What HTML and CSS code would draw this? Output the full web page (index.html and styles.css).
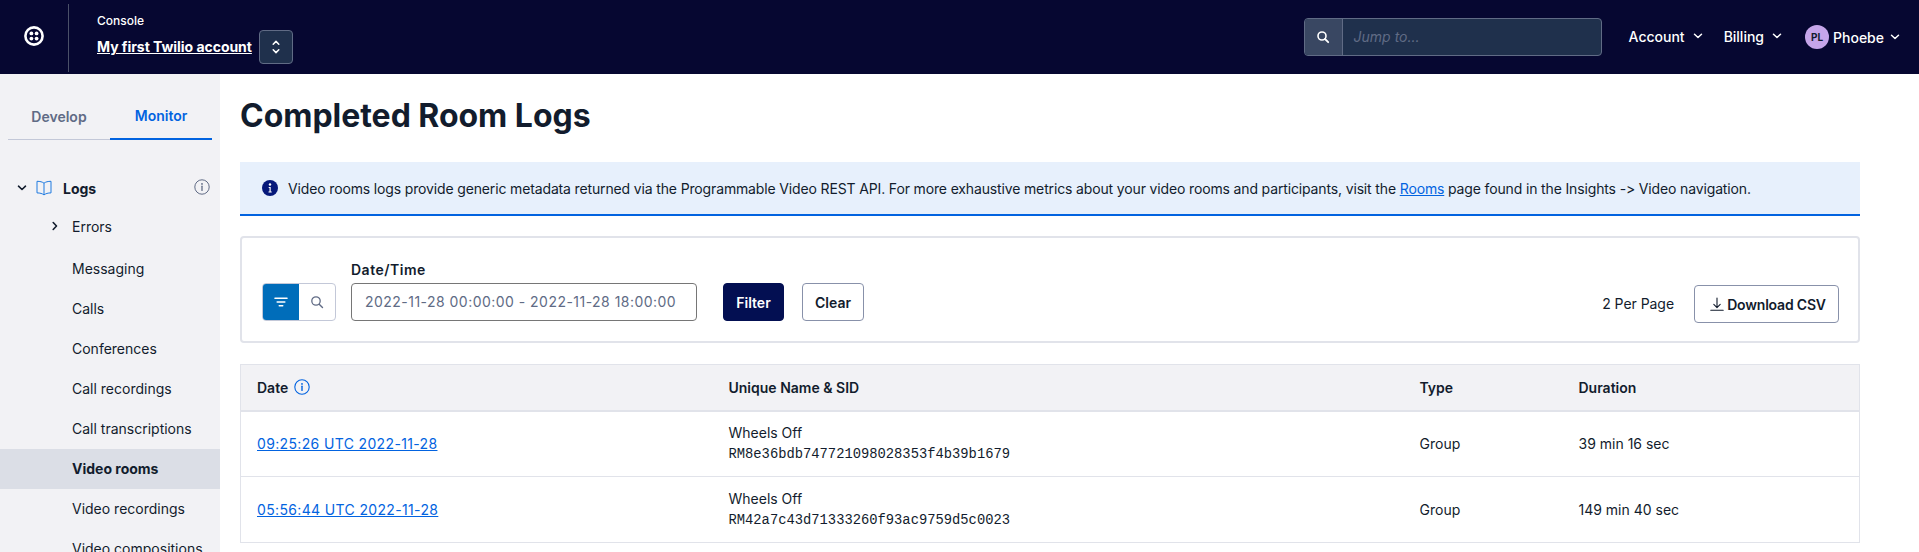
FILE: index.html
```html
<!DOCTYPE html>
<html lang="en">
<head>
<meta charset="utf-8">
<title>Completed Room Logs</title>
<link rel="stylesheet" href="styles.css">
</head>
<body>
<header class="topbar">
  <div class="logo-cell">
    <svg class="logo" viewBox="0 0 20 20" width="20" height="20"><circle cx="10" cy="10" r="8.6" fill="none" stroke="#fff" stroke-width="2.6"/><circle cx="7.4" cy="7.4" r="1.9" fill="#fff"/><circle cx="12.6" cy="7.4" r="1.9" fill="#fff"/><circle cx="7.4" cy="12.6" r="1.9" fill="#fff"/><circle cx="12.6" cy="12.6" r="1.9" fill="#fff"/></svg>
  </div>
  <div class="account">
    <div class="console">Console</div>
    <div class="account-row">
      <a class="account-name">My first Twilio account</a>
      <span class="switcher"><svg viewBox="0 0 12 20" width="12" height="20"><path d="M3.2 7.2 6 4.4l2.8 2.8M3.2 12.8 6 15.6l2.8-2.8" fill="none" stroke="#fff" stroke-width="1.5" stroke-linecap="round" stroke-linejoin="round"/></svg></span>
    </div>
  </div>
  <div class="jump">
    <span class="jump-icon"><svg viewBox="0 0 14 14" width="14" height="14"><circle cx="6" cy="6" r="4" fill="none" stroke="#fff" stroke-width="1.6"/><path d="m9 9 3.2 3.2" stroke="#fff" stroke-width="1.8" stroke-linecap="round"/></svg></span>
    <span class="jump-text">Jump to...</span>
  </div>
  <nav class="top-nav">
    <span class="top-item">Account<svg class="chev" viewBox="0 0 10 6" width="10" height="6"><path d="m1.5 1.2 3.5 3.3 3.5-3.3" fill="none" stroke="#fff" stroke-width="1.5" stroke-linecap="round" stroke-linejoin="round"/></svg></span>
    <span class="top-item">Billing<svg class="chev" viewBox="0 0 10 6" width="10" height="6"><path d="m1.5 1.2 3.5 3.3 3.5-3.3" fill="none" stroke="#fff" stroke-width="1.5" stroke-linecap="round" stroke-linejoin="round"/></svg></span>
    <span class="top-item user"><span class="avatar">PL</span>Phoebe<svg class="chev" viewBox="0 0 10 6" width="10" height="6"><path d="m1.5 1.2 3.5 3.3 3.5-3.3" fill="none" stroke="#fff" stroke-width="1.5" stroke-linecap="round" stroke-linejoin="round"/></svg></span>
  </nav>
</header>
<div class="body-row">
  <aside class="sidebar">
    <div class="tabs">
      <span class="tab">Develop</span>
      <span class="tab active">Monitor</span>
    </div>
    <div class="logs-row">
      <svg class="logs-chev" viewBox="0 0 10 6" width="10" height="6"><path d="m1.5 1.2 3.5 3.3 3.5-3.3" fill="none" stroke="#121c2d" stroke-width="1.6" stroke-linecap="round" stroke-linejoin="round"/></svg>
      <svg class="book" viewBox="0 0 18 18" width="18" height="18"><path d="M9 4.2C7.4 2.9 5 2.3 2 2.3v11.6c3 0 5.4.7 7 2 1.6-1.3 4-2 7-2V2.3c-3 0-5.4.6-7 1.9Zm0 0v11.7" fill="none" stroke="#1f7ae0" stroke-width="1" stroke-linejoin="round"/></svg>
      <span class="logs-label">Logs</span>
      <svg class="logs-info" viewBox="0 0 16 16" width="16" height="16"><circle cx="8" cy="8" r="7.2" fill="none" stroke="#606b85" stroke-width="1"/><circle cx="8" cy="4.9" r=".9" fill="#606b85"/><path d="M8 7.2v4.2" stroke="#606b85" stroke-width="1.3" stroke-linecap="round"/></svg>
    </div>
    <ul class="menu">
      <li class="menu-item first"><svg class="menu-chev" viewBox="0 0 6 10" width="6" height="10"><path d="m1.2 1.5 3.3 3.5-3.3 3.5" fill="none" stroke="#121c2d" stroke-width="1.6" stroke-linecap="round" stroke-linejoin="round"/></svg>Errors</li>
      <li class="menu-item">Messaging</li>
      <li class="menu-item">Calls</li>
      <li class="menu-item">Conferences</li>
      <li class="menu-item">Call recordings</li>
      <li class="menu-item">Call transcriptions</li>
      <li class="menu-item current">Video rooms</li>
      <li class="menu-item">Video recordings</li>
      <li class="menu-item">Video compositions</li>
    </ul>
  </aside>
  <main class="content">
    <h1 class="title">Completed Room Logs</h1>
    <div class="alert">
      <svg class="alert-icon" viewBox="0 0 16 16" width="16" height="16"><circle cx="8" cy="8" r="8" fill="#06187a"/><circle cx="8" cy="4.5" r="1.2" fill="#fff"/><path d="M6.7 7h2v4.6h1v1H6.5v-1h1V8h-.8Z" fill="#fff"/></svg>
      <span class="alert-text">Video rooms logs provide generic metadata returned via the Programmable Video REST API. For more exhaustive metrics about your video rooms and participants, visit the <a class="link">Rooms</a> page found in the Insights -&gt; Video navigation.</span>
    </div>
    <section class="filters">
      <div class="toggle">
        <span class="toggle-btn on"><svg viewBox="0 0 14 10" width="14" height="10"><path d="M1 1.2h12M3.2 5h7.6M5.3 8.8h3.4" stroke="#fff" stroke-width="1.6" stroke-linecap="round"/></svg></span>
        <span class="toggle-btn"><svg viewBox="0 0 14 14" width="14" height="14"><circle cx="6" cy="6" r="4.2" fill="none" stroke="#606b85" stroke-width="1.3"/><path d="m9.2 9.2 3.3 3.3" stroke="#606b85" stroke-width="1.4" stroke-linecap="round"/></svg></span>
      </div>
      <div class="field">
        <label class="field-label">Date/Time</label>
        <div class="field-input">2022-11-28 00:00:00 - 2022-11-28 18:00:00</div>
      </div>
      <button class="btn primary">Filter</button>
      <button class="btn clear">Clear</button>
      <span class="per-page">2 Per Page</span>
      <button class="btn download"><svg viewBox="0 0 14 16" width="14" height="16"><path d="M7 2v9.5M3.8 8.4 7 11.6l3.2-3.2M.8 14.3h12.4" fill="none" stroke="#121c2d" stroke-width="1.1" stroke-linecap="round" stroke-linejoin="round"/></svg>Download CSV</button>
    </section>
    <table class="logs">
      <thead>
        <tr>
          <th class="col-date"><span class="th-date">Date<svg viewBox="0 0 16 16" width="16" height="16"><circle cx="8" cy="8" r="7.2" fill="none" stroke="#0263e0" stroke-width="1.1"/><circle cx="8" cy="4.9" r=".9" fill="#0263e0"/><path d="M8 7.2v4.2" stroke="#0263e0" stroke-width="1.4" stroke-linecap="round"/></svg></span></th>
          <th class="col-name">Unique Name &amp; SID</th>
          <th class="col-type">Type</th>
          <th>Duration</th>
        </tr>
      </thead>
      <tbody>
        <tr>
          <td class="cell-date"><a class="link">09:25:26 UTC 2022-11-28</a></td>
          <td>Wheels Off<br><code class="sid">RM8e36bdb747721098028353f4b39b1679</code></td>
          <td>Group</td>
          <td>39 min 16 sec</td>
        </tr>
        <tr>
          <td class="cell-date"><a class="link">05:56:44 UTC 2022-11-28</a></td>
          <td>Wheels Off<br><code class="sid">RM42a7c43d71333260f93ac9759d5c0023</code></td>
          <td>Group</td>
          <td>149 min 40 sec</td>
        </tr>
      </tbody>
    </table>
  </main>
</div>
</body>
</html>
```
FILE: styles.css
```css
* { box-sizing: border-box; }
html, body { margin: 0; height: 552px; overflow: hidden; }
body { font-family: Inter, "Liberation Sans", sans-serif; font-size: 14px; color: #121c2d; background: #fff; }

.topbar { height: 74px; background: #060731; color: #fff; display: flex; align-items: center; }
.logo-cell { width: 69px; height: 68px; margin-top: 2px; border-right: 1px solid #4a5068; display: flex; align-items: center; justify-content: center; flex: none; padding-right: 1px; padding-bottom: 4px; }
.account { margin-left: 28px; display: flex; flex-direction: column; }
.console { font-size: 12px; font-weight: 500; line-height: 18px; margin-top: 1px; }
.account-row { display: flex; align-items: center; gap: 7px; }
.account-name { font-size: 14px; font-weight: 700; line-height: 20px; text-decoration: underline; letter-spacing: -.04px; }
.switcher { width: 34px; height: 34px; border: 1px solid #606b85; border-radius: 4px; background: #1f304c; display: flex; align-items: center; justify-content: center; }
.jump { margin-left: auto; width: 298px; height: 38px; border: 1px solid #606b85; border-radius: 4px; background: #1f304c; display: flex; align-items: stretch; overflow: hidden; }
.jump-icon { width: 38px; background: #394762; border-right: 1px solid #606b85; display: flex; align-items: center; justify-content: center; }
.jump-text { font-style: italic; color: #606b85; font-size: 14px; line-height: 36px; padding-left: 11px; }
.top-nav { display: flex; align-items: center; margin-left: 27px; padding-right: 19px; }
.top-item { display: flex; align-items: center; font-size: 14px; font-weight: 500; gap: 8px; margin-right: 21px; padding-bottom: 2px; }
.top-item.user { margin-right: 0; margin-left: 2px; gap: 0; padding-bottom: 0; }
.user .chev { margin-left: 6px; }
.avatar { width: 24px; height: 24px; border-radius: 50%; background: #c5a5ea; color: #121c2d; font-size: 10px; font-weight: 700; display: flex; align-items: center; justify-content: center; margin-right: 4px; }

.body-row { display: flex; height: 478px; overflow: hidden; }
.sidebar { width: 220px; flex: none; background: #f2f2f5; padding: 0 8px; }
.tabs { display: grid; grid-template-columns: 102px 102px; height: 66px; border-bottom: 1px solid #c3c8d8; }
.tab { display: flex; align-items: center; justify-content: center; font-size: 14px; font-weight: 600; color: #606b85; padding-top: 19px; }
.tab.active { color: #0263e0; border-bottom: 2px solid #0263e0; margin-bottom: -1px; padding-top: 19px; }
.logs-row { display: flex; align-items: center; height: 24px; margin-top: 36px; padding-left: 9px; position: relative; }
.book { margin-left: 8px; }
.logs-label { margin-left: 10px; font-weight: 700; font-size: 14px; }
.logs-info { position: absolute; right: 2px; top: 3px; }
.menu { list-style: none; margin: 7px -8px 0; padding: 0; }
.menu-item { height: 40px; display: flex; align-items: center; padding-left: 72px; padding-bottom: 1px; font-size: 14px; position: relative; }
.menu-item.first { height: 42px; padding-bottom: 3px; }
.menu-chev { position: absolute; left: 52px; top: 14px; }
.menu-item.current { background: #dbdee6; font-weight: 700; }

.content { flex: 1; padding: 0 59px 0 20px; min-width: 0; }
.title { margin: 0; font-size: 32px; line-height: 40px; font-weight: 700; padding-top: 22px; height: 88px; letter-spacing: -.03px; }
.alert { height: 54px; background: #e7f0fc; border-bottom: 2px solid #0263e0; display: flex; align-items: center; gap: 10px; padding: 0 22px; font-size: 14px; }
.alert-icon { flex: none; }
.alert-text { letter-spacing: -.145px; font-variant-ligatures: no-contextual; }
.link { color: #0263e0; text-decoration: underline; }

.filters { margin-top: 20px; height: 107px; border: 2px solid #e1e3ea; border-radius: 4px; display: flex; align-items: flex-end; padding: 0 19px 20px 20px; }
.toggle { display: flex; width: 74px; height: 38px; border: 1px solid #c3c8d8; border-radius: 4px; overflow: hidden; }
.toggle-btn { flex: 1; display: flex; align-items: center; justify-content: center; }
.toggle-btn.on { background: #006dba; flex: 0 0 36px; }
.field { margin-left: 15px; width: 346px; }
.field-label { display: block; font-weight: 600; font-size: 14px; line-height: 20px; margin-bottom: 3px; letter-spacing: .5px; }
.field-input { height: 38px; border: 1px solid #767676; border-radius: 4px; color: #606b85; line-height: 36px; padding-left: 13px; font-size: 14px; letter-spacing: .47px; white-space: nowrap; }
.btn { font-family: inherit; font-size: 14px; font-weight: 600; height: 38px; border-radius: 4px; border: 1px solid #8891aa; background: #fff; color: #121c2d; padding: 0; }
.btn.primary { background: #030f52; border-color: #030f52; color: #fff; width: 61px; margin-left: 26px; }
.btn.clear { width: 62px; margin-left: 18px; }
.per-page { margin-left: auto; line-height: 38px; margin-bottom: -2px; letter-spacing: -.05px; }
.btn.download { width: 145px; margin-left: 20px; margin-bottom: -2px; display: flex; align-items: center; justify-content: center; gap: 3px; padding-left: 3px; letter-spacing: -.2px; }

.logs { margin-top: 21px; width: 100%; border-collapse: collapse; table-layout: fixed; border: 1px solid #e1e3ea; }
.logs th { height: 46px; background: #f2f2f5; border-bottom: 2px solid #e1e3ea; text-align: left; font-weight: 600; font-size: 14px; padding: 0 16px; }
.col-date { width: 472px; }
.col-name { width: 691px; }
.col-type { width: 159px; }
.th-date { display: flex; align-items: center; gap: 6px; }
.logs td { height: 66px; border-bottom: 1px solid #e1e3ea; padding: 0 16px; font-size: 14px; line-height: 20px; }
.cell-date { letter-spacing: .35px; }
.sid { font-family: "Liberation Mono", "DejaVu Sans Mono", monospace; font-size: 13.8px; }
```
